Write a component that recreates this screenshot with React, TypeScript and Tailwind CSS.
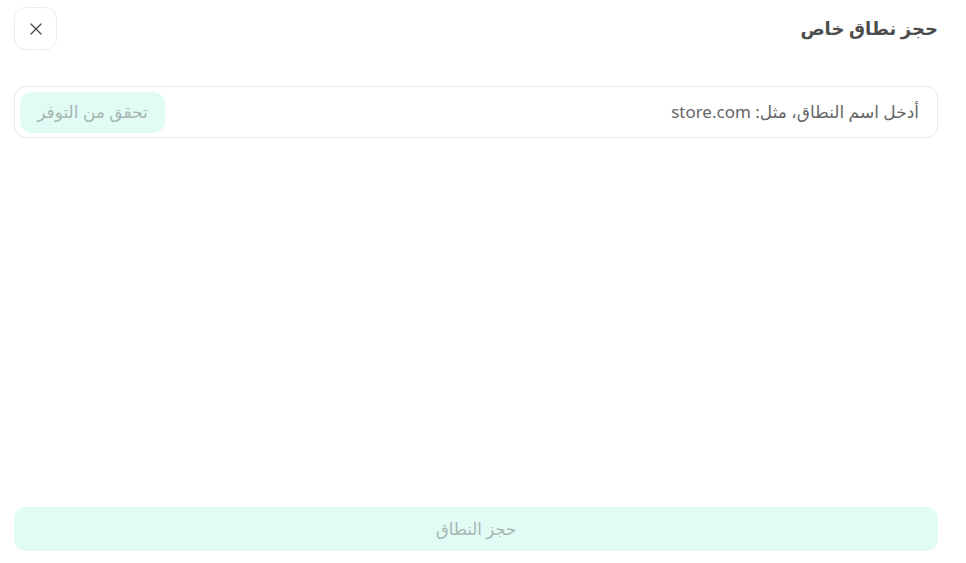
import React from 'react';

const font = { fontFamily: '"Noto Sans", "DejaVu Sans", sans-serif' };

export default function App() {
  return (
    <div dir="rtl" className="w-[966px] h-[563px] bg-white flex flex-col pl-[14px] pr-[28px] pb-3 pt-[7px]" style={font}>
      <div className="flex items-center justify-between h-[43px]">
        <h1 className="text-[18px] font-semibold text-[#4d4d4d]">حجز نطاق خاص</h1>
        <button className="w-[43px] h-[43px] rounded-xl border border-[#ececec] flex items-center justify-center text-[#444]">
          <svg width="16" height="16" viewBox="0 0 16 16" fill="none" stroke="currentColor" strokeWidth="1.3" strokeLinecap="round">
            <path d="M3 3L13 13M13 3L3 13" />
          </svg>
        </button>
      </div>

      <div className="mt-[36px] h-[52px] rounded-xl border border-[#ebebeb] flex items-center justify-between pr-[18px] pl-[5px]">
        <span className="text-[17px] text-[#666]">أدخل اسم النطاق، مثل: store.com</span>
        <button className="h-[41px] w-[145px] rounded-xl bg-[#e0fcf5] text-[17px] text-[#a6b6b1]">تحقق من التوفر</button>
      </div>

      <div className="flex-1" />

      <button className="h-[44px] w-full rounded-xl bg-[#e0fcf5] text-[16.5px] text-[#a6b6b1]">حجز النطاق</button>
    </div>
  );
}
